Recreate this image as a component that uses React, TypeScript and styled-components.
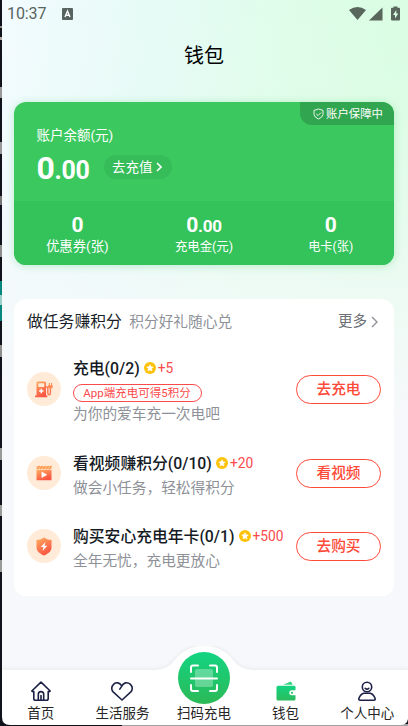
import React from 'react';
import styled, { createGlobalStyle } from 'styled-components';

const GlobalStyle = createGlobalStyle`
  * { box-sizing: border-box; }
  body { margin: 0; font-family: Roboto, "Noto Sans CJK SC", sans-serif; background: #14171f; }
  svg { display: block; flex: none; }
`;

const Screen = styled.main`
  position: relative;
  display: flex;
  flex-direction: column;
  width: 408px;
  height: 726px;
  overflow: hidden;
  background:
    linear-gradient(180deg, rgba(247, 249, 252, 0) 0, rgba(247, 249, 252, 0.1) 110px, rgba(247, 249, 252, 0.65) 300px, #f7f8fb 420px),
    linear-gradient(100deg, #f3fbff 0%, #e4fbf4 34%, #dffde9 54%, #dafde3 75%, #dbfde4 100%);
`;

const DesktopEdge = styled.div`
  position: absolute;
  left: 0;
  top: 0;
  width: 2px;
  height: 726px;
  background: linear-gradient(
    #11131c 0 26px, #8d8880 26px 28px, #11131c 28px 37px, #b0aaa0 37px 40px, #11131c 40px 87px,
    #999 87px 98px, #11131c 98px 142px, #999 142px 154px, #11131c 154px 196px, #777 196px 205px,
    #11131c 205px 245px, #8d8d8d 245px 257px, #11131c 257px 281px, #07877e 281px 295px,
    #9ccfc8 295px 305px, #07877e 305px 321px, #11131c 321px 345px, #8d8d8d 345px 357px,
    #11131c 357px 448px, #999 448px 460px, #11131c 460px 505px, #999 505px 516px,
    #11131c 516px 560px, #999 560px 572px, #11131c 572px
  );
`;

const StatusBar = styled.header`
  display: flex;
  align-items: center;
  height: 28px;
  padding: 0 7px 0 7px;
  color: #58645f;
  font-size: 16px;
  line-height: 28px;
`;
const Clock = styled.span`width: 55px; letter-spacing: -0.1px;`;
const StatusIcons = styled.div`
  display: flex;
  align-items: center;
  margin-left: auto;
`;

const PageTitle = styled.h1`
  margin: 0 0 20px;
  height: 54px;
  line-height: 56px;
  text-align: center;
  font-size: 20px;
  font-weight: 400;
  color: #000;
`;

const BalanceCard = styled.section`
  position: relative;
  height: 163px;
  border-radius: 12px;
  overflow: hidden;
  color: #fff;
  background: #3bc95f;
`;
const CardShadow = styled.div`
  border-radius: 12px;
  height: 163px;
  margin: 0 14px 34px 14px;
  flex: none;
  box-shadow: 0 1px 8px rgba(50, 196, 91, 0.28);
`;
const GuardTag = styled.div`
  position: absolute;
  right: 0;
  top: 0;
  width: 94px;
  height: 23px;
  padding-left: 13px;
  display: flex;
  align-items: center;
  gap: 2px;
  font-size: 11.4px;
  line-height: 22px;
  border-bottom-left-radius: 12px;
  background: #31a550;
  white-space: nowrap;
`;
const BalanceTop = styled.div`
  height: 99px;
  padding: 23px 0 0 22.5px;
`;
const BalanceLabel = styled.div`
  font-size: 13.5px;
  line-height: 20px;
  height: 20px;
`;
const AmountRow = styled.div`
  display: flex;
  align-items: center;
  height: 44px;
`;
const Amount = styled.div<{ $size: number; $cents: number }>`
  font-weight: 700;
  font-size: ${p => p.$size}px;
  line-height: 21px;
  height: 21px;
  letter-spacing: -0.3px;
  small { font-size: ${p => p.$cents}px; }
`;
const Balance = styled(Amount)`
  width: 67.5px;
  height: 32px;
  line-height: 34px;
`;
const RechargePill = styled.button`
  display: flex;
  align-items: center;
  width: 68px;
  height: 24px;
  padding: 0 0 0 8px;
  gap: 3px;
  border: 0;
  border-radius: 12px;
  background: #36bd59;
  color: #fff;
  font: inherit;
  font-size: 13.5px;
  line-height: 22px;
`;
const Stats = styled.div`
  display: grid;
  grid-template-columns: repeat(3, 1fr);
  height: 64px;
  padding-top: 14px;
  background: #33c35a;
`;
const Stat = styled.div`
  display: flex;
  flex-direction: column;
  align-items: center;
`;
const StatLabel = styled.span<{ $size: number }>`
  margin-top: 2px;
  font-size: ${p => p.$size}px;
  line-height: 18px;
`;

const TaskCard = styled.section`
  flex: none;
  width: 380px;
  height: 297px;
  margin-left: 14px;
  padding: 12.5px 13px 0;
  border-radius: 12px;
  background: #fff;
`;
const TaskHead = styled.div`
  display: flex;
  align-items: center;
  height: 20px;
  line-height: 20px;
  white-space: nowrap;
`;
const TaskHeading = styled.h2`
  margin: 0;
  font-size: 15.8px;
  font-weight: 400;
  color: #191f29;
`;
const TaskHint = styled.span`
  margin-left: 7.5px;
  font-size: 14.7px;
  color: #8e9198;
`;
const More = styled.span`
  display: flex;
  align-items: center;
  gap: 4px;
  margin-left: auto;
  padding-right: 3px;
  font-size: 14.5px;
  color: #6d7075;
`;
const TaskRow = styled.article<{ $height: number; $top: number }>`
  display: flex;
  align-items: center;
  height: ${p => p.$height}px;
  margin-top: ${p => p.$top}px;
`;
const IconDisc = styled.div`
  display: flex;
  align-items: center;
  justify-content: center;
  flex: none;
  width: 34px;
  height: 34px;
  border-radius: 50%;
  background: #ffebd8;
`;
const TaskBody = styled.div`
  flex: 1;
  min-width: 0;
  margin-left: 12px;
  padding-top: 5px;
  white-space: nowrap;
`;
const TaskTitle = styled.div`
  display: flex;
  align-items: center;
  height: 22px;
  line-height: 22px;
  font-size: 15.8px;
  font-weight: 500;
  color: #151b25;
`;
const Points = styled.span`
  display: flex;
  align-items: center;
  height: 20px;
  margin: -2px 0 0 4px;
  gap: 2px;
  font-size: 13.8px;
  font-weight: 400;
  line-height: 20px;
  color: #fb4b4b;
`;
const Note = styled.div`
  width: 129px;
  height: 18px;
  margin: 4px 0 1px -0.5px;
  border: 1px solid #fb4b4b;
  border-radius: 9px;
  text-align: center;
  font-size: 11.5px;
  line-height: 16px;
  color: #fb4b4b;
`;
const TaskText = styled.div<{ $top: number }>`
  height: 22px;
  margin-top: ${p => p.$top}px;
  font-size: 14.7px;
  line-height: 22px;
  color: #8e9198;
`;
const ActionButton = styled.button`
  flex: none;
  width: 85px;
  height: 29px;
  padding: 0;
  border: 1px solid #ff4a38;
  border-radius: 15px;
  background: #fff;
  color: #ff4a38;
  font: inherit;
  font-size: 14.7px;
  font-weight: 500;
  line-height: 27px;
`;

const NavWrap = styled.nav`
  position: relative;
  flex: none;
  margin-top: auto;
  height: 80px;
`;
const NavShape = styled.svg`
  position: absolute;
  left: 0;
  top: 0;
`;
const NavPath = styled.path`
  filter: drop-shadow(0 -1px 2px rgba(0, 0, 0, 0.06));
`;
const NavItems = styled.div`
  position: relative;
  display: grid;
  grid-template-columns: repeat(5, 1fr);
  height: 80px;
`;
const NavItem = styled.div`
  display: flex;
  flex-direction: column;
  align-items: center;
  justify-content: flex-end;
  padding-bottom: 4px;
  font-size: 13.5px;
  line-height: 18px;
  color: #262626;
  white-space: nowrap;
`;
const NavIcon = styled.div<{ $height: number }>`
  display: flex;
  align-items: center;
  justify-content: center;
  height: ${p => p.$height}px;
  margin-bottom: ${p => (p.$height > 30 ? 0 : 2)}px;
`;

const Chevron = ({ w, h, color, stroke }: { w: number; h: number; color: string; stroke: number }) => (
  <svg width={w} height={h} viewBox={`0 0 ${w} ${h}`} fill="none" stroke={color} strokeWidth={stroke}>
    <path d={`M1 1L${w - 1} ${h / 2}L1 ${h - 1}`} />
  </svg>
);

const Coin = () => (
  <svg width="12" height="12" viewBox="0 0 12 12">
    <circle cx="6" cy="6" r="6" fill="#ffc20a" />
    <path d="M6 2.800l1 2 2.200.3-1.600 1.600.4 2.200L6 7.900 4 8.900l.4-2.200L2.800 5.100 5 4.800z" fill="#fff" stroke="#fff" strokeWidth=".6" strokeLinejoin="round" />
  </svg>
);

const OrangeFill = ({ id }: { id: string }) => (
  <defs>
    <linearGradient id={id} x1="0" y1="0" x2=".5" y2="1">
      <stop offset="0" stopColor="#ffae60" />
      <stop offset="1" stopColor="#fa5543" />
    </linearGradient>
  </defs>
);

const PumpIcon = () => (
  <svg width="18" height="17" viewBox="0 0 18 17">
    <OrangeFill id="pump" />
    <path fillRule="evenodd" d="M3 .5h6.500Q11 .5 11 2v12.500h1.300v1.700H0v-1.700h1.500V2Q1.500.5 3 .5zM3.300 2.200V6h6V2.200z" fill="url(#pump)" />
    <path d="M11 6h.8q1 0 1 1v5q0 1.800 1.300 1.800t1.300-1.800V7.500" fill="none" stroke="#fb7550" strokeWidth="1.400" />
    <path d="M13 4.200h.8V2h1v2.200h1.200V2h1v2.200h.8v1.500q0 2-2.400 2T13 5.700z" fill="#ff8a55" />
    <path d="M5.600 7.800h1.400v1.500h1.500v1.400H7v1.500H5.600v-1.500H4.100V9.300h1.500z" fill="#fff" />
  </svg>
);
const VideoIcon = () => (
  <svg width="16" height="16" viewBox="0 0 16 16">
    <OrangeFill id="video" />
    <path d="M.5 1h15v3H.5z" fill="#ffc48f" />
    <path d="M1 4l2.500-3M4 4l2.500-3M7 4l2.500-3M10 4l2.500-3M13 4l2.500-3" stroke="#ff9347" strokeWidth="1.200" />
    <path d="M.5 4.800h15v9.900q0 .5-.5.500H1q-.5 0-.5-.5z" fill="url(#video)" />
    <path d="M5.800 7v5.600l5-2.800z" fill="#fff" stroke="#fff" strokeLinejoin="round" strokeWidth=".5" />
  </svg>
);
const ShieldIcon = () => (
  <svg width="16" height="19" viewBox="0 0 16 19">
    <OrangeFill id="shield" />
    <path d="M8 .5Q11.500 3 15.500 3v7.500c0 4-4 6.500-7.500 8-3.500-1.500-7.500-4-7.500-8V3Q4.500 3 8 .5z" fill="url(#shield)" />
    <path d="M9.500 5L4.800 10h2.700l-1 4 4.800-5.200H8.500z" fill="#fff" />
  </svg>
);

const HomeIcon = () => (
  <svg width="22" height="22" viewBox="0 0 22 22" fill="none" stroke="#1c2145" strokeWidth="1.600" strokeLinejoin="round" strokeLinecap="round">
    <path d="M1.800 11L11 2.200l9.200 8.800q-.8 1-2 .5v7q0 1.800-1.600 1.800H5.400q-1.600 0-1.600-1.800v-7q-1.200.5-2-.5z" />
    <path d="M8.300 20v-5.700a2.700 2.700 0 015.400 0V20M11 15.500V20" />
  </svg>
);
const HeartIcon = () => (
  <svg width="24" height="22" viewBox="0 0 24 22" fill="none" stroke="#1c2145" strokeWidth="1.600" strokeLinejoin="round" strokeLinecap="round">
    <path d="M11.500 5.500C9.500 2.500 6.200 2 3.800 4.100 1 6.700 1.200 10 3.400 12.200L12 20l8.600-7.800C22.800 10 23 6.700 20.200 4.100c-3-2.500-6.700-1.400-8.400 2l-2 3" />
  </svg>
);
const WalletIcon = () => (
  <svg width="22" height="22" viewBox="0 0 22 22">
    <defs>
      <linearGradient id="wallet" x1="0" y1="0" x2="0" y2="1">
        <stop offset="0" stopColor="#13d481" />
        <stop offset="1" stopColor="#2cbb5d" />
      </linearGradient>
    </defs>
    <path d="M8.500 4.800L15 1.800q1-.4 1.500.4l1.200 2.600z" fill="#2fd57f" />
    <path d="M3 5.800h16q1.500 0 1.500 1.500V19q0 1.500-1.500 1.500H3Q1.500 20.500 1.500 19V7.300Q1.500 5.800 3 5.800z" fill="url(#wallet)" />
    <path d="M21 10.300h-4.200a2.500 2.500 0 000 5H21z" fill="#fff" />
    <circle cx="17" cy="12.800" r="1.100" fill="#28c268" />
  </svg>
);
const PersonIcon = () => (
  <svg width="22" height="22" viewBox="0 0 22 22" fill="none" stroke="#1c2145" strokeWidth="1.600" strokeLinejoin="round" strokeLinecap="round">
    <circle cx="11" cy="7" r="4.700" />
    <path d="M9.200 8.300q1.800 1.500 3.600 0M7.600 13.300h6.800q3.200 1 4.800 5.400.2 1.500-1.200 1.500H4q-1.400 0-1.200-1.500 1.600-4.400 4.800-5.400z" />
  </svg>
);
const ScanIcon = () => (
  <svg width="52" height="52" viewBox="0 0 52 52">
    <defs>
      <linearGradient id="scan" x1="0" y1="0" x2="0" y2="1">
        <stop offset="0" stopColor="#13d481" />
        <stop offset="1" stopColor="#2cb958" />
      </linearGradient>
    </defs>
    <circle cx="26" cy="26" r="26" fill="url(#scan)" />
    <rect x="17" y="17" width="18" height="18" rx="2" fill="#fff" opacity=".3" />
    <path d="M13 20v-4.500q0-2 2-2h5M32 13.500h5q2 0 2 2V20M13 33v4q0 2 2 2h5M32 39h5q2 0 2-2v-4M13 26.500h26" fill="none" stroke="#fff" strokeWidth="2" strokeLinecap="round" />
  </svg>
);

const tasks = [
  { icon: <PumpIcon />, title: '充电(0/2)', points: '+5', note: 'App端充电可得5积分', text: '为你的爱车充一次电吧', action: '去充电', height: 68, top: 23.5, gap: 0 },
  { icon: <VideoIcon />, title: '看视频赚积分(0/10)', points: '+20', text: '做会小任务，轻松得积分', action: '看视频', height: 46, top: 27, gap: 2 },
  { icon: <ShieldIcon />, title: '购买安心充电年卡(0/1)', points: '+500', text: '全年无忧，充电更放心', action: '去购买', height: 46, top: 27, gap: 2 },
];

const navItems = [
  { label: '首页', icon: <HomeIcon />, height: 22 },
  { label: '生活服务', icon: <HeartIcon />, height: 22 },
  { label: '扫码充电', icon: <ScanIcon />, height: 52 },
  { label: '钱包', icon: <WalletIcon />, height: 22 },
  { label: '个人中心', icon: <PersonIcon />, height: 22 },
];

export default function App() {
  return (
    <Screen>
      <GlobalStyle />
      <StatusBar>
        <Clock>10:37</Clock>
        <svg width="11" height="12" viewBox="0 0 11 12">
          <rect width="11" height="12" rx="1" fill="#58645f" />
          <path d="M3 9l2.500-6L8 9M4 7.200h3" fill="none" stroke="#fff" strokeWidth="1.400" />
        </svg>
        <StatusIcons>
          <svg width="52" height="16" viewBox="0 0 52 16" fill="#58665c">
            <path d="M0 4Q8.500 -2 17 4L8.500 14z" />
            <path d="M33.500 1.500v13H20z" />
            <path fillRule="evenodd" d="M44.500 .5h4v1.200H50q1 0 1 1v10.800q0 1-1 1h-7q-1 0-1-1V2.700q0-1 1-1h1.500zM47.300 4L44 9h2v3.500L49.300 7.500h-2z" />
          </svg>
        </StatusIcons>
      </StatusBar>
      <PageTitle>钱包</PageTitle>

      <CardShadow>
        <BalanceCard>
          <BalanceTop>
            <BalanceLabel>账户余额(元)</BalanceLabel>
            <AmountRow>
              <Balance $size={32} $cents={25}>0<small>.00</small></Balance>
              <RechargePill>去充值<Chevron w={6} h={10} color="#fff" stroke={1.6} /></RechargePill>
            </AmountRow>
          </BalanceTop>
          <Stats>
            <Stat><Amount $size={21} $cents={17}>0</Amount><StatLabel $size={13.4}>优惠券(张)</StatLabel></Stat>
            <Stat><Amount $size={21} $cents={17}>0<small>.00</small></Amount><StatLabel $size={12.4}>充电金(元)</StatLabel></Stat>
            <Stat><Amount $size={21} $cents={17}>0</Amount><StatLabel $size={12.2}>电卡(张)</StatLabel></Stat>
          </Stats>
          <GuardTag>
            <svg width="11" height="12" viewBox="0 0 11 12" fill="none" stroke="#fff" strokeWidth=".9">
              <path d="M5.500 1L10 2.400v4Q9.500 9.500 5.500 11 1.500 9.500 1 6.400v-4zM3.300 6l1.700 1.600L8 4.600" />
            </svg>
            账户保障中
          </GuardTag>
        </BalanceCard>
      </CardShadow>

      <TaskCard>
        <TaskHead>
          <TaskHeading>做任务赚积分</TaskHeading>
          <TaskHint>积分好礼随心兑</TaskHint>
          <More>更多<Chevron w={7} h={12} color="#8e9198" stroke={1.4} /></More>
        </TaskHead>
        {tasks.map(t => (
          <TaskRow key={t.title} $height={t.height} $top={t.top}>
            <IconDisc>{t.icon}</IconDisc>
            <TaskBody>
              <TaskTitle>{t.title}<Points><Coin />{t.points}</Points></TaskTitle>
              {t.note && <Note>{t.note}</Note>}
              <TaskText $top={t.gap}>{t.text}</TaskText>
            </TaskBody>
            <ActionButton>{t.action}</ActionButton>
          </TaskRow>
        ))}
      </TaskCard>

      <NavWrap>
        <NavShape width="408" height="80" viewBox="0 0 408 80">
          <rect y="70" width="408" height="10" fill="#11131c" />
          <rect x="122" y="78" width="286" height="2" fill="#a5a5a5" />
          <NavPath
            d="M2 24H151C163 24 168 22 175 14C183 4 192 0 204 0S225 4 233 14C240 22 245 24 257 24H408V73Q407 79 400 79H10Q2 79 2 71z"
            fill="#fff"
          />
        </NavShape>
        <NavItems>
          {navItems.map(n => (
            <NavItem key={n.label}><NavIcon $height={n.height}>{n.icon}</NavIcon>{n.label}</NavItem>
          ))}
        </NavItems>
      </NavWrap>
      <DesktopEdge />
    </Screen>
  );
}
